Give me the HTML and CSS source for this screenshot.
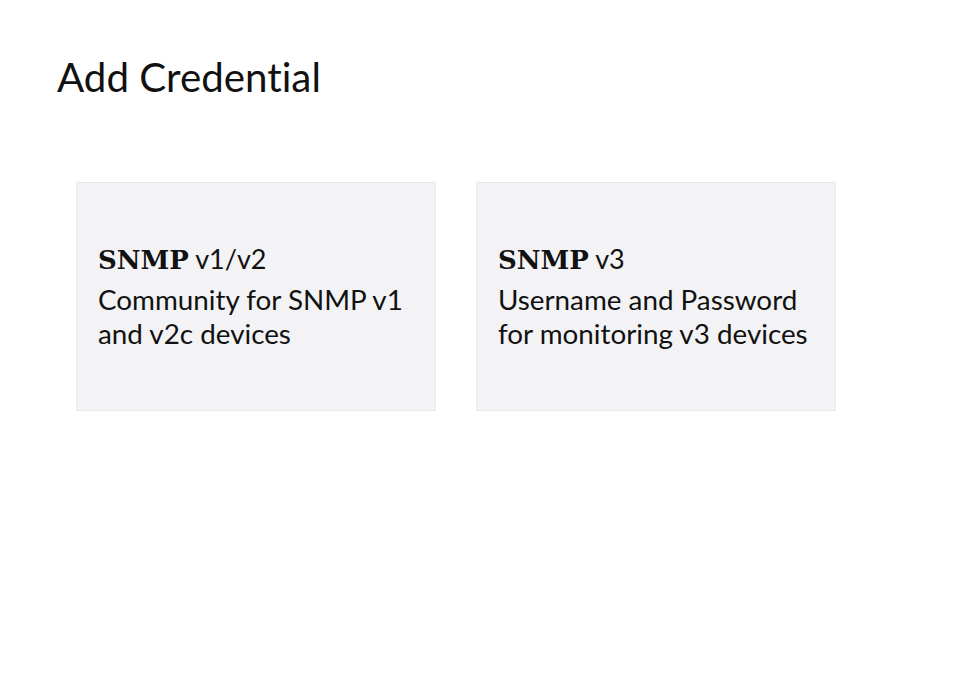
FILE: index.html
```html
<!DOCTYPE html>
<html>
<head>
<meta charset="utf-8">
<link rel="stylesheet" href="styles.css">
</head>
<body>
<div class="page">
  <h1 class="page-title">Add Credential</h1>
  <div class="cards">
    <div class="card">
      <div class="card-title"><span class="proto">SNMP</span> v1/v2</div>
      <div class="card-desc">Community for SNMP v1<br>and v2c devices</div>
    </div>
    <div class="card">
      <div class="card-title"><span class="proto">SNMP</span> v3</div>
      <div class="card-desc">Username and Password<br>for monitoring v3 devices</div>
    </div>
  </div>
</div>
</body>
</html>
```
FILE: styles.css
```css
html, body {
  margin: 0;
  padding: 0;
  background: #ffffff;
}
.page {
  padding: 53px 0 0 57px;
  font-family: Lato, "Open Sans", sans-serif;
  font-variant-ligatures: none;
  color: #111111;
}
.page-title {
  margin: 0;
  font-size: 40.3px;
  font-weight: 400;
  line-height: 48px;
}
.cards {
  display: flex;
  gap: 40px;
  margin-top: 81px;
  margin-left: 19px;
}
.card {
  width: 360px;
  height: 229px;
  box-sizing: border-box;
  background: #f3f3f5;
  border: 1px solid #e9e9eb;
  padding: 0 21px;
  display: flex;
  flex-direction: column;
  justify-content: center;
}
.card-title {
  font-size: 27px;
  line-height: 34px;
  color: #111111;
}
.proto {
  font-family: "DejaVu Serif", serif;
  font-weight: 700;
  font-size: 26px;
}
.card-desc {
  font-size: 27.8px;
  line-height: 34px;
  margin-top: 6px;
  color: #111111;
}
```
